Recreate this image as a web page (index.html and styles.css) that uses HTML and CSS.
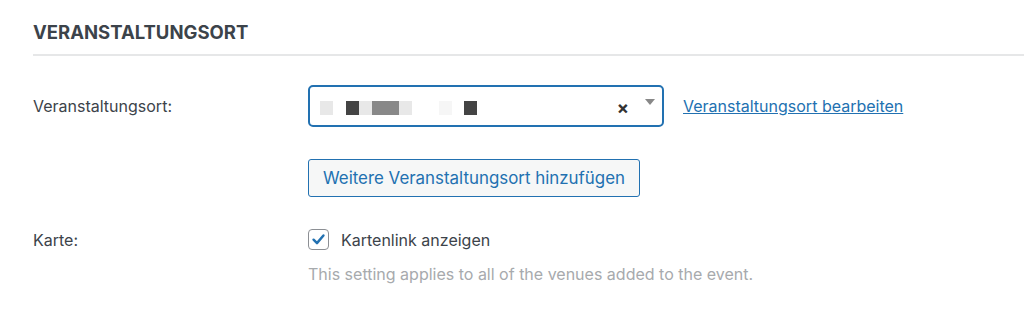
FILE: index.html
```html
<!DOCTYPE html>
<html lang="de">
<head>
    <meta charset="UTF-8">
    <meta name="viewport" content="width=device-width, initial-scale=1.0">
    <title>Veranstaltungsort</title>
    <link rel="stylesheet" href="styles.css">
</head>
<body>
    <div class="section">
        <h2 class="section-title">VERANSTALTUNGSORT</h2>

        <!-- Venue select -->
        <div class="form-row row-venue">
            <label class="form-label">Veranstaltungsort:</label>
            <div class="form-field">
                <div class="select-box">
                    <div class="select-value">
                        <span class="px px-light"></span>
                        <span class="px px-gap"></span>
                        <span class="px px-dark"></span>
                        <span class="px px-light"></span>
                        <span class="px px-mid wide"></span>
                        <span class="px px-light"></span>
                        <span class="px px-gap wide"></span>
                        <span class="px px-faint"></span>
                        <span class="px px-gap small"></span>
                        <span class="px px-dark"></span>
                    </div>
                    <span class="select-clear">&times;</span>
                    <span class="select-arrow"></span>
                </div>
                <a href="#" class="edit-link">Veranstaltungsort bearbeiten</a>
            </div>
        </div>

        <div class="form-row row-add">
            <div class="form-label"></div>
            <div class="form-field">
                <button class="btn-secondary" type="button">Weitere Veranstaltungsort hinzufügen</button>
            </div>
        </div>

        <!-- Map link -->
        <div class="form-row row-map">
            <label class="form-label">Karte:</label>
            <div class="form-field column">
                <label class="checkbox-label">
                    <span class="checkbox">
                        <svg viewBox="0 0 20 20" width="20" height="20">
                            <path d="M4.8 10.2 L8.4 13.8 L15.2 5.8" fill="none" stroke="#2271b1" stroke-width="2.6" stroke-linecap="round" stroke-linejoin="round"/>
                        </svg>
                    </span>
                    Kartenlink anzeigen
                </label>
                <p class="description">This setting applies to all of the venues added to the event.</p>
            </div>
        </div>
    </div>
</body>
</html>
```

FILE: styles.css
```css
body {
    margin: 0;
    background: #fff;
    font-family: "Inter", "Liberation Sans", sans-serif;
    font-size: 16px;
    color: #3c434a;
}
.section {
    padding-left: 33px;
}
.section-title {
    margin: 0;
    padding-top: 22px;
    padding-bottom: 12px;
    font-size: 18.5px;
    font-weight: 700;
    color: #3c434a;
    line-height: 20px;
    border-bottom: 2px solid #e6e7e8;
}
.form-row {
    display: grid;
    grid-template-columns: 275px 1fr;
    align-items: center;
}
.row-venue {
    margin-top: 29px;
}
.row-add {
    margin-top: 32px;
}
.row-map {
    margin-top: 32px;
    align-items: start;
}
.form-label {
    color: #3c434a;
}
.row-map .form-label {
    line-height: 20px;
    padding-top: 1px;
}
.form-field {
    display: flex;
    align-items: center;
    gap: 19px;
}
.form-field.column {
    flex-direction: column;
    align-items: flex-start;
    gap: 14px;
}
.select-box {
    width: 342px;
    height: 38px;
    border: 2px solid #2271b1;
    border-radius: 5px;
    display: flex;
    align-items: center;
    padding-left: 10px;
}
.select-value {
    flex: 1;
    display: flex;
    align-items: center;
    height: 14px;
    margin-top: 4px;
}
.px {
    width: 13px;
    height: 14px;
}
.px.wide {
    width: 27px;
}
.px.small {
    width: 12px;
}
.px-light { background: #e8e8e8; }
.px-dark { background: #444; }
.px-mid { background: #888; }
.px-faint { background: #f6f6f6; }
.px-gap { background: transparent; }
.select-clear {
    font-size: 18px;
    font-weight: 700;
    color: #333;
    margin-right: 16px;
    margin-top: 2px;
}
.select-arrow {
    width: 0;
    height: 0;
    border-left: 5px solid transparent;
    border-right: 5px solid transparent;
    border-top: 6px solid #888;
    margin-right: 7px;
    margin-top: -8px;
}
.edit-link {
    color: #2271b1;
    text-decoration: underline;
}
.btn-secondary {
    font-family: inherit;
    font-size: 16.9px;
    color: #2271b1;
    background: #f6f7f7;
    border: 1px solid #2271b1;
    border-radius: 3px;
    height: 38px;
    padding: 0 14px;
    cursor: pointer;
}
.checkbox-label {
    display: flex;
    align-items: center;
    gap: 12px;
    line-height: 20px;
}
.checkbox {
    width: 19px;
    height: 19px;
    border: 1px solid #8c8f94;
    border-radius: 4px;
    display: flex;
    align-items: center;
    justify-content: center;
}
.checkbox svg {
    width: 19px;
    height: 19px;
}
.description {
    margin: 0;
    color: #a7aaad;
    line-height: 20px;
}
```
